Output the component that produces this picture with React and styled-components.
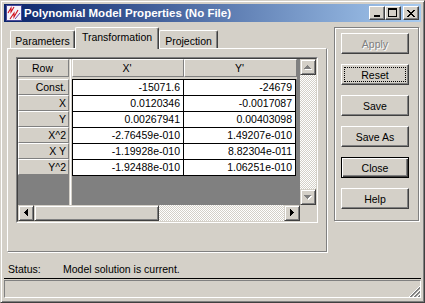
import React from 'react';
import styled, { createGlobalStyle, css } from 'styled-components';

const GlobalStyle = createGlobalStyle`
  * { box-sizing: border-box; }
  html, body { margin: 0; padding: 0; background: #d4d0c8; }
  body {
    font-family: "Liberation Sans", Arial, sans-serif;
    font-size: 10.5px;
    color: #000;
  }
`;

const raised = css`
  background: #d4d0c8;
  border: 1px solid;
  border-color: #fff #404040 #404040 #fff;
  box-shadow: inset -1px -1px 0 #808080;
`;

const Window = styled.div`
  width: 425px;
  height: 303px;
  padding: 3px;
  background: #d4d0c8;
  border: 1px solid;
  border-color: #d4d0c8 #404040 #404040 #d4d0c8;
  box-shadow: inset 1px 1px 0 #fff, inset -1px -1px 0 #808080;
  display: flex;
  flex-direction: column;
`;

const TitleBar = styled.div`
  height: 18px;
  flex-shrink: 0;
  display: flex;
  align-items: center;
  padding: 0 2px;
  background: linear-gradient(to right, #0a246a, #a6caf0);
  color: #fff;
`;

const TitleText = styled.span`
  flex: 1;
  margin-left: 2px;
  font-weight: bold;
  font-size: 11.5px;
  white-space: nowrap;
`;

const CaptionButton = styled.div`
  ${raised};
  width: 16px;
  height: 14px;
  margin-left: ${p => p.$gap || 0}px;
  display: flex;
  align-items: center;
  justify-content: center;
  flex-shrink: 0;
`;

const Body = styled.div`
  flex: 1;
  display: flex;
  flex-direction: column;
`;

const Content = styled.div`
  padding: 5px 2px 0 3px;
`;

const TopRow = styled.div`
  display: flex;
  align-items: flex-start;
  gap: 7px;
`;

const TabControl = styled.div`
  width: 320px;
  display: flex;
  flex-direction: column;
`;

const TabStrip = styled.div`
  height: 21px;
  display: flex;
  align-items: flex-end;
  padding-left: 3px;
  position: relative;
  z-index: 1;
`;

const Tab = styled.div`
  width: ${p => p.$w}px;
  height: ${p => (p.$active ? 22 : 18)}px;
  margin-bottom: ${p => (p.$active ? -1 : 0)}px;
  padding-top: ${p => (p.$active ? 3 : 2)}px;
  background: #d4d0c8;
  border-top: 1px solid #fff;
  border-left: 1px solid #fff;
  border-right: 1px solid #404040;
  box-shadow: inset -1px 0 0 #808080;
  border-radius: 2px 2px 0 0;
  display: flex;
  align-items: ${p => (p.$active ? 'flex-start' : 'center')};
  justify-content: center;
  white-space: nowrap;
`;

const TabPanel = styled.div`
  height: 204px;
  border: 1px solid;
  border-color: #fff #808080 #808080 #fff;
  box-shadow: 1px 1px 0 #fff;
  padding: 8px 0 0 8px;
`;

const GridOuter = styled.div`
  width: 302px;
  height: 166px;
  border: 1px solid;
  border-color: #808080 #fff #fff #808080;
`;

const GridInner = styled.div`
  height: 100%;
  border: 1px solid;
  border-color: #404040 #d4d0c8 #d4d0c8 #404040;
  display: grid;
  grid-template-columns: 1fr 16px;
  grid-template-rows: 1fr 16px;
`;

const Sheet = styled.div`
  display: flex;
  background: #808080;
  overflow: hidden;
`;

const RowHeadCol = styled.div`
  width: 51px;
  display: flex;
  flex-direction: column;
`;

const ColGap = styled.div`
  width: 3px;
  background: linear-gradient(to right, #d4d0c8 1px, #fff 1px 2px, #d4d0c8 2px);
`;

const DataCol = styled.div`
  width: 225px;
  display: flex;
  flex-direction: column;
`;

const HeadRow = styled.div`
  display: flex;
`;

const HeadGap = styled.div`
  height: 2px;
  flex-shrink: 0;
  background: #d4d0c8;
`;

const HeadCell = styled.div`
  width: ${p => (p.$w ? `${p.$w}px` : 'auto')};
  height: ${p => p.$h || 18}px;
  flex-shrink: 0;
  background: #d4d0c8;
  border: 1px solid;
  border-color: #fff #808080 #808080 #fff;
  display: flex;
  align-items: center;
  justify-content: ${p => (p.$right ? 'flex-end' : 'center')};
  padding: 0 2px 0 0;
  white-space: nowrap;
`;

const DataTable = styled.div`
  display: grid;
  grid-template-columns: 111px 112px;
  width: fit-content;
  background: #fff;
  border-top: 1px solid #000;
  border-left: 1px solid #000;
`;

const DataCell = styled.div`
  height: 16px;
  line-height: 15px;
  border-right: 1px solid #000;
  border-bottom: 1px solid #000;
  text-align: right;
  padding-right: 3px;
  white-space: nowrap;
`;

const VScroll = styled.div`
  display: flex;
  flex-direction: column;
`;

const HScroll = styled.div`
  display: flex;
`;

const Track = styled.div`
  flex: 1;
  background: repeating-conic-gradient(#fff 0% 25%, #d4d0c8 0% 50%) 0 0 / 2px 2px;
`;

const ScrollBtn = styled.div`
  width: 16px;
  height: 16px;
  flex-shrink: 0;
  background: #d4d0c8;
  border: 1px solid;
  border-color: #d4d0c8 #404040 #404040 #d4d0c8;
  box-shadow: inset 1px 1px 0 #fff, inset -1px -1px 0 #808080;
  display: flex;
  align-items: center;
  justify-content: center;
`;

const Thumb = styled(ScrollBtn)`
  width: 125px;
`;

const Corner = styled.div`
  background: #d4d0c8;
`;

const SideFrame = styled.div`
  width: 85px;
  height: 194px;
  border: 1px solid #808080;
  box-shadow: inset 1px 1px 0 #fff, 1px 1px 0 #fff;
  padding: 5px 0 0 6px;
  display: flex;
  flex-direction: column;
  gap: 10px;
`;

const PushButton = styled.button`
  ${raised};
  width: 68px;
  height: 21px;
  padding: 0;
  font: inherit;
  color: #000;
  position: relative;
  ${p => p.$default && css`
    border: 1px solid #000;
    box-shadow: inset 1px 1px 0 #fff, inset -1px -1px 0 #404040, inset -2px -2px 0 #808080;
  `}
  ${p => p.disabled && css`
    color: #808080;
    text-shadow: 1px 1px 0 #fff;
  `}
  ${p => p.$focus && css`
    &::after {
      content: '';
      position: absolute;
      inset: 2px;
      border: 1px dotted #000;
    }
  `}
`;

const StatusRow = styled.div`
  display: flex;
  height: 14px;
  line-height: 14px;
  margin-top: 10px;
  padding-left: 1px;
  white-space: nowrap;
`;

const StatusLabel = styled.span`
  width: 55px;
`;

const Rule = styled.div`
  margin-top: auto;
  height: 1px;
  background: #000;
`;

const StatusBar = styled.div`
  height: 18px;
  margin: 1px 0;
  border: 1px solid;
  border-color: #808080 #fff #fff #808080;
  display: flex;
  align-items: flex-end;
  justify-content: flex-end;
`;

const AppIcon = () => (
  <svg width="16" height="16" viewBox="0 0 16 16" style={{ display: 'block', flexShrink: 0 }}>
    <rect x="0.5" y="0.5" width="15" height="15" fill="#f4f4fa" stroke="#4a4a9a" />
    <path d="M2 8 L5 3 L5 7 L8 2" fill="none" stroke="#d0101c" strokeWidth="1.1" />
    <path d="M4 14 L8 8 L8 12 L12 5" fill="none" stroke="#d0101c" strokeWidth="1.1" />
    <path d="M9 14 L14 8" fill="none" stroke="#7040a0" strokeWidth="1" />
  </svg>
);

const MinGlyph = () => (
  <svg width="14" height="12" viewBox="0 0 14 12" style={{ display: 'block' }}>
    <rect x="4" y="8" width="6" height="2" fill="#000" />
  </svg>
);

const MaxGlyph = () => (
  <svg width="14" height="12" viewBox="0 0 14 12" style={{ display: 'block' }}>
    <path d="M2 1h9v9H2z M3 3v6h7V3z" fill="#000" fillRule="evenodd" />
  </svg>
);

const CloseGlyph = () => (
  <svg width="8" height="7" viewBox="0 0 8 7" style={{ display: 'block' }}>
    <path
      d="M0 0h2v1H0z M6 0h2v1H6z M1 1h2v1H1z M5 1h2v1H5z M2 2h4v1H2z M3 3h2v1H3z M2 4h4v1H2z M1 5h2v1H1z M5 5h2v1H5z M0 6h2v1H0z M6 6h2v1H6z"
      fill="#000"
    />
  </svg>
);

const arrows = {
  up: { w: 7, h: 4, d: 'M3 0h1v1h1v1h1v1h1v1H0V3h1V2h1V1h1z' },
  down: { w: 7, h: 4, d: 'M0 0h7v1H6v1H5v1H4v1H3V3H2V2H1V1H0z' },
  left: { w: 4, h: 7, d: 'M3 0h1v7H3V6H2V5H1V4H0V3h1V2h1V1h1z' },
  right: { w: 4, h: 7, d: 'M0 0h1v1h1v1h1v1h1v1H3v1H2v1H1v1H0z' },
};

const Arrow = ({ dir, disabled }) => {
  const a = arrows[dir];
  return (
    <svg width={a.w + 1} height={a.h + 1} viewBox={`0 0 ${a.w + 1} ${a.h + 1}`} style={{ display: 'block' }}>
      {disabled && <path d={a.d} fill="#fff" transform="translate(1 1)" />}
      <path d={a.d} fill={disabled ? '#808080' : '#000'} />
    </svg>
  );
};

const SizeGrip = () => (
  <svg width="12" height="12" viewBox="0 0 12 12" style={{ display: 'block' }} shapeRendering="crispEdges">
    {[0, 4, 8].map(o => (
      <g key={o}>
        <line x1={o + 1} y1="12" x2="12" y2={o + 1} stroke="#fff" />
        <line x1={o + 2} y1="12" x2="12" y2={o + 2} stroke="#808080" />
        <line x1={o + 3} y1="12" x2="12" y2={o + 3} stroke="#808080" />
      </g>
    ))}
  </svg>
);

const rows = [
  ['Const.', '-15071.6', '-24679'],
  ['X', '0.0120346', '-0.0017087'],
  ['Y', '0.00267941', '0.00403098'],
  ['X^2', '-2.76459e-010', '1.49207e-010'],
  ['X Y', '-1.19928e-010', '8.82304e-011'],
  ['Y^2', '-1.92488e-010', '1.06251e-010'],
];

const buttons = [
  { label: 'Apply', disabled: true },
  { label: 'Reset', focus: true },
  { label: 'Save' },
  { label: 'Save As' },
  { label: 'Close', def: true },
  { label: 'Help' },
];

export default function App() {
  return (
    <>
      <GlobalStyle />
      <Window>
        <TitleBar>
          <AppIcon />
          <TitleText>Polynomial Model Properties (No File)</TitleText>
          <CaptionButton><MinGlyph /></CaptionButton>
          <CaptionButton><MaxGlyph /></CaptionButton>
          <CaptionButton $gap={2}><CloseGlyph /></CaptionButton>
        </TitleBar>
        <Body>
          <Content>
            <TopRow>
              <TabControl>
                <TabStrip>
                  <Tab $w={65}>Parameters</Tab>
                  <Tab $w={84} $active>Transformation</Tab>
                  <Tab $w={59}>Projection</Tab>
                </TabStrip>
                <TabPanel>
                  <GridOuter>
                    <GridInner>
                      <Sheet>
                        <RowHeadCol>
                          <HeadCell>Row</HeadCell>
                          <HeadGap />
                          {rows.map(r => (
                            <HeadCell key={r[0]} $h={16} $right>{r[0]}</HeadCell>
                          ))}
                        </RowHeadCol>
                        <ColGap />
                        <DataCol>
                          <HeadRow>
                            <HeadCell $w={112}>X'</HeadCell>
                            <HeadCell $w={113}>Y'</HeadCell>
                          </HeadRow>
                          <HeadGap />
                          <DataTable>
                            {rows.map(r => (
                              <React.Fragment key={r[0]}>
                                <DataCell>{r[1]}</DataCell>
                                <DataCell>{r[2]}</DataCell>
                              </React.Fragment>
                            ))}
                          </DataTable>
                        </DataCol>
                      </Sheet>
                      <VScroll>
                        <ScrollBtn><Arrow dir="up" disabled /></ScrollBtn>
                        <Track />
                        <ScrollBtn><Arrow dir="down" disabled /></ScrollBtn>
                      </VScroll>
                      <HScroll>
                        <ScrollBtn><Arrow dir="left" /></ScrollBtn>
                        <Thumb />
                        <Track />
                        <ScrollBtn><Arrow dir="right" /></ScrollBtn>
                      </HScroll>
                      <Corner />
                    </GridInner>
                  </GridOuter>
                </TabPanel>
              </TabControl>
              <SideFrame>
                {buttons.map(b => (
                  <PushButton key={b.label} disabled={b.disabled} $focus={b.focus} $default={b.def}>
                    {b.label}
                  </PushButton>
                ))}
              </SideFrame>
            </TopRow>
            <StatusRow>
              <StatusLabel>Status:</StatusLabel>
              <span>Model solution is current.</span>
            </StatusRow>
          </Content>
          <Rule />
          <StatusBar><SizeGrip /></StatusBar>
        </Body>
      </Window>
    </>
  );
}
